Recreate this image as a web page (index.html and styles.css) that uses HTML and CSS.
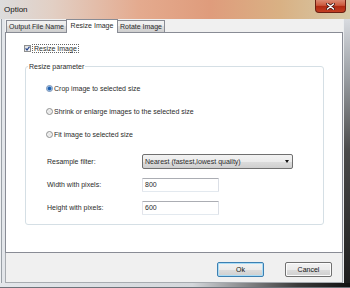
FILE: index.html
```html
<!DOCTYPE html>
<html lang="en">
<head>
    <meta charset="UTF-8">
    <title>Option</title>
    <link rel="stylesheet" href="styles.css">
</head>
<body>
    <div class="window">
        <div class="titlebar">
            <span class="title">Option</span>
            <div class="close">
                <svg width="9" height="7" viewBox="0 0 9 7">
                    <path d="M1.5 1 L7.5 6 M7.5 1 L1.5 6" stroke="#4a160e" stroke-width="3" stroke-linecap="round"/>
                    <path d="M1.5 1 L7.5 6 M7.5 1 L1.5 6" stroke="#fff" stroke-width="1.5" stroke-linecap="round"/>
                </svg>
            </div>
        </div>

        <div class="frame">
            <div class="client">
                <!-- tab strip -->
                <div class="tabs">
                    <div class="tab tab-output">Output File Name</div>
                    <div class="tab tab-resize active">Resize Image</div>
                    <div class="tab tab-rotate">Rotate Image</div>
                </div>

                <div class="panel">
                    <div class="check-row">
                        <span class="checkbox">
                            <svg width="5" height="5" viewBox="0 0 5 5">
                                <path d="M0.6 2.4 L2 4 L4.5 0.6" fill="none" stroke="#27478f" stroke-width="1.2"/>
                            </svg>
                        </span>
                        <span class="focus">Resize Image</span>
                    </div>

                    <fieldset class="group">
                        <legend>Resize parameter</legend>
                        <div class="radios">
                            <div class="radio-row"><span class="radio on"></span>Crop image to selected size</div>
                            <div class="radio-row"><span class="radio"></span>Shrink or enlarge images to the selected size</div>
                            <div class="radio-row"><span class="radio"></span>Fit image to selected size</div>
                        </div>
                        <div class="form">
                            <span>Resample filter:</span>
                            <div class="select">Nearest (fastest,lowest quailty)<span class="arrow"></span></div>
                            <span>Width with pixels:</span>
                            <div class="input">800</div>
                            <span>Height with pixels:</span>
                            <div class="input">600</div>
                        </div>
                    </fieldset>
                </div>

                <div class="footer">
                    <button class="btn default">Ok</button>
                    <button class="btn">Cancel</button>
                </div>
            </div>
            <div class="edge"></div>
        </div>
        <div class="bottom"></div>
    </div>
</body>
</html>
```

FILE: styles.css
```css
body {
    margin: 0;
    width: 350px;
    height: 288px;
    overflow: hidden;
    font-family: "Liberation Sans", Arial, sans-serif;
    font-size: 7px;
    color: #2b2b2b;
    background: #222;
}

.window {
    width: 350px;
    height: 288px;
    display: flex;
    flex-direction: column;
    background: #e1e4e8;
}

/* title bar */
.titlebar {
    height: 19px;
    flex: none;
    display: flex;
    justify-content: space-between;
    align-items: flex-start;
    background: linear-gradient(90deg, #dcdcdc 0%, #e2cfc4 15%, #e4aa8e 40%, #df9c7c 60%, #d9b184 80%, #d6c9a8 100%);
}

.title {
    font-size: 8px;
    line-height: 9px;
    padding: 5px 0 0 4px;
    color: #111;
}

.close {
    flex: none;
    width: 31px;
    height: 13px;
    margin-right: 4px;
    box-sizing: border-box;
    border: 1px solid #6a1f12;
    border-top: none;
    border-radius: 0 0 4px 4px;
    background: linear-gradient(#dc8a72 0%, #cc5a3e 45%, #b02a12 52%, #c43e22 100%);
    display: flex;
    align-items: center;
    justify-content: center;
}

.frame {
    flex: 1;
    display: flex;
    padding-left: 5px;
    background: linear-gradient(90deg, #eef0f2 0 1px, #9aa0a7 1px 2px, #e3e6ea 2px) no-repeat;
    background-size: 5px 100%;
}

.client {
    width: 338px;
    display: flex;
    flex-direction: column;
    background: #f0f0f0;
}

.edge {
    width: 7px;
    box-sizing: border-box;
    border-left: 1px solid #eceef0;
    background: linear-gradient(180deg, #d8dbe0 0%, #9a9ea3 22%, #4a4a4a 50%, #1e1e1e 100%);
}

.bottom {
    height: 5px;
    box-sizing: border-box;
    border-bottom: 1px solid #6d737a;
    background: linear-gradient(90deg, #e3e6ea 0%, #d4d7db 55%, #3a3a3a 85%, #111 100%);
}

/* tabs */
.tabs {
    height: 13px;
    display: flex;
    align-items: flex-end;
    padding-left: 1px;
    position: relative;
    z-index: 1;
}

.tab {
    height: 12px;
    box-sizing: border-box;
    border: 1px solid #898c95;
    border-bottom: none;
    margin-left: -1px;
    background: linear-gradient(#f2f2f2, #ebebeb 50%, #dddddd 50%, #cfcfcf);
    text-align: center;
    line-height: 11px;
    white-space: nowrap;
}

.tab-output { width: 61px; margin-left: 0; }
.tab-resize { width: 52px; }
.tab-rotate { width: 48px; }

.tab.active {
    height: 14px;
    margin-bottom: -1px;
    line-height: 12px;
    background: #fff;
}

.panel {
    height: 221px;
    box-sizing: border-box;
    border: 1px solid #898c95;
    background: #fff;
    padding-top: 11px;
}

.check-row {
    display: flex;
    align-items: center;
    gap: 1px;
    height: 9px;
    margin-left: 18px;
}

.checkbox {
    width: 7px;
    height: 7px;
    box-sizing: border-box;
    border: 1px solid #8e8f8f;
    background: linear-gradient(135deg, #dcdcdc, #fafafa);
    display: flex;
    align-items: center;
    justify-content: center;
}

.focus {
    border: 1px dotted #666;
    padding: 0 1px;
    line-height: 7px;
}

/* group box */
.group {
    margin: 9px 18px 0 19px;
    padding: 0 0 5px 0;
    border: 1px solid #d5dfe5;
    border-radius: 3px;
    min-width: 0;
}

.group legend {
    margin-left: 2px;
    padding: 0 1px;
    line-height: 9px;
}

.radios {
    padding: 6px 0 0 20px;
}

.radio-row {
    height: 23px;
    display: flex;
    align-items: center;
    gap: 1px;
}

.radio {
    width: 7px;
    height: 7px;
    box-sizing: border-box;
    border: 1px solid #8e8f8f;
    border-radius: 50%;
    background: radial-gradient(circle, #e4e4e4, #fafafa);
}

.radio.on {
    border-color: #6f8db5;
    background: radial-gradient(circle, #1d5fae 0 1.3px, #74a4da 2px, #eef3f8 2.6px);
}

.form {
    margin: 4px 0 0 21px;
    display: grid;
    grid-template-columns: 95px auto;
    grid-auto-rows: 23px;
    align-items: center;
}

.select {
    width: 151px;
    height: 15px;
    box-sizing: border-box;
    display: flex;
    align-items: center;
    justify-content: space-between;
    padding: 0 3px 0 2px;
    border: 1px solid #707070;
    border-radius: 2px;
    background: linear-gradient(#f2f2f2, #ebebeb 50%, #dddddd 50%, #cfcfcf);
}

.arrow {
    width: 0;
    height: 0;
    border-top: 3px solid #111;
    border-left: 2.5px solid transparent;
    border-right: 2.5px solid transparent;
}

.input {
    width: 77px;
    height: 14px;
    box-sizing: border-box;
    padding-left: 2px;
    line-height: 12px;
    border: 1px solid;
    border-color: #abadb3 #dbdfe6 #e3e9ef #e2e3ea;
    border-radius: 1px;
    background: #fff;
}

/* buttons */
.footer {
    height: 30px;
    box-sizing: border-box;
    border: 1px solid #a7abb0;
    border-top: none;
    display: flex;
    justify-content: flex-end;
    align-items: flex-start;
    gap: 21px;
    padding: 9px 10px 0 0;
}

.btn {
    width: 47px;
    height: 15px;
    padding: 0;
    font-family: inherit;
    font-size: 7px;
    color: #111;
    border: 1px solid #707070;
    border-radius: 2px;
    background: linear-gradient(#f2f2f2, #ebebeb 50%, #dddddd 50%, #cfcfcf);
    box-shadow: inset 0 0 0 1px #fcfcfc;
}

.btn.default {
    border-color: #3c7fb1;
    box-shadow: inset 0 0 0 1px #a9dcf6;
}
```
